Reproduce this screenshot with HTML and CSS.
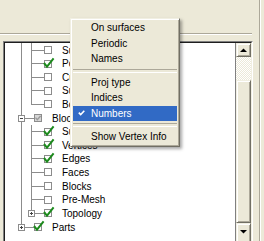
FILE: index.html
```html
<!DOCTYPE html>
<html>
<head>
<meta charset="utf-8">
<link rel="stylesheet" href="styles.css">
</head>
<body>
<div class="main">
  <div class="toparea"></div>
  <div class="groove"></div>
  <div class="treebox">
    <div class="treeinner">
      <div class="tree">
        <div class="row h14"><i class="g"></i><i class="b"></i><svg class="cb" viewBox="0 0 8 8"><rect x=".5" y=".5" width="7" height="7" fill="#fff" stroke="#8c8c8c"/></svg><span class="lbl">Subsets</span></div>
        <div class="row h13"><i class="g"></i><i class="b"></i><svg class="cb" viewBox="0 0 8 8"><rect x=".5" y=".5" width="7" height="7" fill="#fff" stroke="#8c8c8c"/><path d="M0 3 L3 6.6 L9.6 -1.6" fill="none" stroke="#1c8a1c" stroke-width="2"/></svg><span class="lbl">Points</span></div>
        <div class="row h14"><i class="g"></i><i class="b"></i><svg class="cb" viewBox="0 0 8 8"><rect x=".5" y=".5" width="7" height="7" fill="#fff" stroke="#8c8c8c"/></svg><span class="lbl">Curves</span></div>
        <div class="row h13"><i class="g"></i><i class="b"></i><svg class="cb" viewBox="0 0 8 8"><rect x=".5" y=".5" width="7" height="7" fill="#fff" stroke="#8c8c8c"/></svg><span class="lbl">Surfaces</span></div>
        <div class="row h14"><i class="g"></i><i class="b last"></i><svg class="cb" viewBox="0 0 8 8"><rect x=".5" y=".5" width="7" height="7" fill="#fff" stroke="#8c8c8c"/></svg><span class="lbl">Bodies</span></div>
        <div class="row h14"><i class="b"><span class="exp"></span></i><svg class="cb" viewBox="0 0 8 8"><rect x=".5" y=".5" width="7" height="7" fill="#d6d6d6" stroke="#8c8c8c"/><path d="M1.5 3.6 L3.3 5.6 L6.6 2" fill="none" stroke="#9a9a9a" stroke-width="1.4"/></svg><span class="lbl">Blocking</span></div>
        <div class="row h13"><i class="g"></i><i class="b"></i><svg class="cb" viewBox="0 0 8 8"><rect x=".5" y=".5" width="7" height="7" fill="#fff" stroke="#8c8c8c"/><path d="M0 3 L3 6.6 L9.6 -1.6" fill="none" stroke="#1c8a1c" stroke-width="2"/></svg><span class="lbl">Subsets</span></div>
        <div class="row h14"><i class="g"></i><i class="b"></i><svg class="cb" viewBox="0 0 8 8"><rect x=".5" y=".5" width="7" height="7" fill="#fff" stroke="#8c8c8c"/><path d="M0 3 L3 6.6 L9.6 -1.6" fill="none" stroke="#1c8a1c" stroke-width="2"/></svg><span class="lbl">Vertices</span></div>
        <div class="row h13"><i class="g"></i><i class="b"></i><svg class="cb" viewBox="0 0 8 8"><rect x=".5" y=".5" width="7" height="7" fill="#fff" stroke="#8c8c8c"/><path d="M0 3 L3 6.6 L9.6 -1.6" fill="none" stroke="#1c8a1c" stroke-width="2"/></svg><span class="lbl">Edges</span></div>
        <div class="row h14"><i class="g"></i><i class="b"></i><svg class="cb" viewBox="0 0 8 8"><rect x=".5" y=".5" width="7" height="7" fill="#fff" stroke="#8c8c8c"/></svg><span class="lbl">Faces</span></div>
        <div class="row h14"><i class="g"></i><i class="b"></i><svg class="cb" viewBox="0 0 8 8"><rect x=".5" y=".5" width="7" height="7" fill="#fff" stroke="#8c8c8c"/></svg><span class="lbl">Blocks</span></div>
        <div class="row h13"><i class="g"></i><i class="b"></i><svg class="cb" viewBox="0 0 8 8"><rect x=".5" y=".5" width="7" height="7" fill="#fff" stroke="#8c8c8c"/></svg><span class="lbl">Pre-Mesh</span></div>
        <div class="row h14"><i class="g"></i><i class="b last"><span class="exp plus"></span></i><svg class="cb" viewBox="0 0 8 8"><rect x=".5" y=".5" width="7" height="7" fill="#fff" stroke="#8c8c8c"/><path d="M0 3 L3 6.6 L9.6 -1.6" fill="none" stroke="#1c8a1c" stroke-width="2"/></svg><span class="lbl">Topology</span></div>
        <div class="row h14"><i class="b last"><span class="exp plus"></span></i><svg class="cb" viewBox="0 0 8 8"><rect x=".5" y=".5" width="7" height="7" fill="#fff" stroke="#8c8c8c"/><path d="M0 3 L3 6.6 L9.6 -1.6" fill="none" stroke="#1c8a1c" stroke-width="2"/></svg><span class="lbl">Parts</span></div>
      </div>
      <div class="scroll">
        <div class="sbtn up"><svg width="7" height="4" viewBox="0 0 7 4"><polygon points="0,4 7,4 3.5,0.5" fill="#000"/></svg></div>
        <div class="track"></div>
        <div class="sbtn thumb"></div>
        <div class="sbtn down"><svg width="7" height="4" viewBox="0 0 7 4"><polygon points="0,0 7,0 3.5,3.5" fill="#000"/></svg></div>
      </div>
    </div>
  </div>
</div>
<div class="vline"></div>

<div class="menu">
  <div class="mi">On surfaces</div>
  <div class="mi">Periodic</div>
  <div class="mi">Names</div>
  <div class="sep"></div>
  <div class="mi">Proj type</div>
  <div class="mi">Indices</div>
  <div class="mi sel"><span class="mchk"><svg width="7" height="6" viewBox="0 0 7 6"><path d="M0.8 2.6 L2.7 4.6 L6.3 0.8" fill="none" stroke="#fff" stroke-width="1.6"/></svg></span>Numbers</div>
  <div class="sep"></div>
  <div class="mi">Show Vertex Info</div>
</div>
</body>
</html>
```

FILE: styles.css
```css
* { box-sizing: border-box; }
html, body { margin: 0; padding: 0; }
body {
  width: 264px;
  height: 241px;
  overflow: hidden;
  background: #ece9d8;
  font-family: "Liberation Sans", Arial, sans-serif;
  font-size: 10px;
  color: #000;
  position: relative;
  display: flex;
}
.main { width: 259px; flex: none; display: flex; flex-direction: column; }
.vline { width: 2px; flex: none; border-left: 1px solid #aca899; border-right: 1px solid #fff; }
.toparea { height: 33px; flex: none; }
.groove { width: 252px; height: 2px; flex: none; border-top: 1px solid #aca899; border-bottom: 1px solid #fff; }
.treebox {
  margin: 6px 0 0 3px;
  width: 250px;
  height: 204px;
  flex: none;
  border: 1px solid;
  border-color: #808080 #fff #fff #808080;
}
.treeinner {
  height: 100%;
  border: 1px solid;
  border-color: #1e1e1e #f1efe2 #f1efe2 #1e1e1e;
  background: #fff;
  display: flex;
}
.tree { flex: 1; padding-left: 11px; overflow: hidden; }
.row { display: flex; align-items: center; white-space: nowrap; }
.h14 { height: 14px; }
.h13 { height: 13px; }
.g {
  width: 10px; height: 100%; flex: none;
  background: linear-gradient(#8c8c8c, #8c8c8c) 5px 0 / 1px 100% no-repeat;
}
.b {
  width: 18px; height: 100%; flex: none;
  display: flex; align-items: center;
  background:
    linear-gradient(#8c8c8c, #8c8c8c) 5px 0 / 1px 100% no-repeat,
    linear-gradient(#8c8c8c, #8c8c8c) 5px 50% / 13px 1px no-repeat;
}
.b.last {
  background:
    linear-gradient(#8c8c8c, #8c8c8c) 5px 0 / 1px 50% no-repeat,
    linear-gradient(#8c8c8c, #8c8c8c) 5px 50% / 13px 1px no-repeat;
}
.exp {
  width: 7px; height: 7px; margin-left: 2px;
  border: 1px solid #8c8c8c;
  background: linear-gradient(#444, #444) center / 3px 1px no-repeat, #fff;
}
.exp.plus {
  background:
    linear-gradient(#444, #444) center / 3px 1px no-repeat,
    linear-gradient(#444, #444) center / 1px 3px no-repeat,
    #fff;
}
.cb { width: 8px; height: 8px; flex: none; overflow: visible; }
.lbl { margin-left: 10px; }

.scroll {
  width: 16px; flex: none;
  border-left: 1px solid #808080;
  display: flex; flex-direction: column;
  background: #ece9d8;
}
.sbtn {
  background: #ece9d8;
  border: 1px solid;
  border-color: #f1efe2 #716f64 #716f64 #f1efe2;
  box-shadow: inset 1px 1px #fff, inset -1px -1px #aca899;
  display: flex; align-items: center; justify-content: center;
  flex: none;
}
.up { height: 14px; }
.track {
  height: 23px; flex: none;
  background: repeating-conic-gradient(#fff 0 25%, #ece9d8 0 50%) 0 0 / 2px 2px;
}
.thumb { height: 143px; }
.down { height: 20px; align-items: flex-start; padding-top: 6px; }

.menu {
  position: absolute;
  left: 70px; top: 18px;
  width: 110px; height: 129px;
  background: #ece9d8;
  border: 1px solid;
  border-color: #f1efe2 #716f64 #716f64 #f1efe2;
  box-shadow: inset 1px 1px #fff, inset -1px -1px #aca899, 2px 2px 3px rgba(0, 0, 0, 0.35);
  padding: 1px 2px;
}
.mi {
  height: 15.5px;
  line-height: 15.5px;
  padding-left: 18px;
  display: flex; align-items: center;
  white-space: nowrap;
}
.mi.sel { background: #316ac5; color: #fff; }
.mchk { width: 18px; margin-left: -18px; padding-left: 5px; display: flex; align-items: center; }
.sep { height: 8px; display: flex; align-items: center; }
.sep::before {
  content: "";
  flex: 1;
  height: 2px;
  border-top: 1px solid #aca899;
  border-bottom: 1px solid #fff;
}
```
